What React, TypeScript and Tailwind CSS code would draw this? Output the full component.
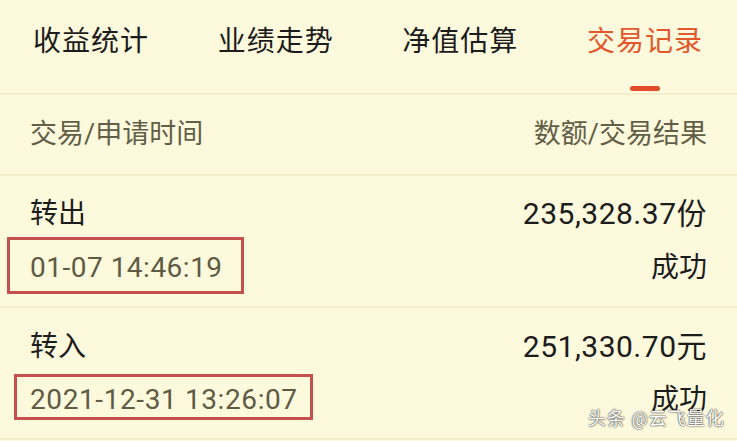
import React from "react";

const font = { fontFamily: '"Roboto", "Noto Sans CJK SC", sans-serif' };

export default function App() {
  return (
    <div
      className="w-[737px] h-[441px] overflow-hidden bg-[#fdf9dc] relative"
      style={font}
    >
      {/* Tabs */}
      <div className="h-[93px] flex items-start px-[33px] pt-[24px] justify-between pr-[34px]">
        {["收益统计", "业绩走势", "净值估算"].map((t) => (
          <div key={t} className="text-[28px] leading-[36px] text-[#1c1c1c] tracking-[1px]">
            {t}
          </div>
        ))}
        <div className="flex flex-col items-center">
          <div className="text-[28px] leading-[36px] text-[#e0582c] tracking-[1px]">交易记录</div>
          <div className="mt-[26px] w-[30px] h-[5px] rounded-full bg-[#e24b27]" />
        </div>
      </div>
      <div className="h-[2px] bg-[#f4eecb]" />

      {/* Header */}
      <div className="h-[79px] flex items-center justify-between px-[30px] pb-[2px]">
        <div className="text-[27px] leading-[36px] text-[#625e48]">交易/申请时间</div>
        <div className="text-[27px] leading-[36px] text-[#625e48]">数额/交易结果</div>
      </div>
      <div className="h-[2px] bg-[#f4eecb]" />

      {/* Row 1 */}
      <div className="h-[130px] flex flex-col px-[30px] pt-[20px]">
        <div className="flex justify-between items-center h-[36px]">
          <div className="text-[28px] leading-[36px] text-[#1c1c1c]">转出</div>
          <div className="text-[30px] leading-[36px] tracking-[0.5px] text-[#1c1c1c]">235,328.37份</div>
        </div>
        <div className="flex justify-between items-center h-[36px] mt-[18px]">
          <div className="relative text-[28px] leading-[36px] tracking-[0.5px] text-[#5f5b45]">
            01-07 14:46:19
            <div className="absolute left-[-23px] right-[-21px] top-[-13px] bottom-[-8px] border-[3px] border-[#c4514d]" />
          </div>
          <div className="text-[28px] leading-[36px] text-[#1c1c1c]">成功</div>
        </div>
      </div>
      <div className="h-[2px] bg-[#f4eecb]" />

      {/* Row 2 */}
      <div className="h-[130px] flex flex-col px-[30px] pt-[21px]">
        <div className="flex justify-between items-center h-[36px]">
          <div className="text-[28px] leading-[36px] text-[#1c1c1c]">转入</div>
          <div className="text-[30px] leading-[36px] tracking-[0.5px] text-[#1c1c1c]">251,330.70元</div>
        </div>
        <div className="flex justify-between items-center h-[36px] mt-[17px]">
          <div className="relative text-[28px] leading-[36px] tracking-[0.6px] text-[#5f5b45]">
            2021-12-31 13:26:07
            <div className="absolute left-[-16px] right-[-15px] top-[-8px] bottom-[-2px] border-[3px] border-[#c4514d]" />
          </div>
          <div className="text-[28px] leading-[36px] text-[#1c1c1c]">成功</div>
        </div>
      </div>
      <div className="h-[2px] bg-[#f4eecb]" />

      {/* Watermark */}
      <div
        className="absolute left-[588px] top-[408px] text-[18px] leading-[22px] tracking-[1px] text-white"
        style={{ textShadow: "0 0 2px #333, 0 0 1px #333" }}
      >
        头条 @云飞量化
      </div>
    </div>
  );
}
